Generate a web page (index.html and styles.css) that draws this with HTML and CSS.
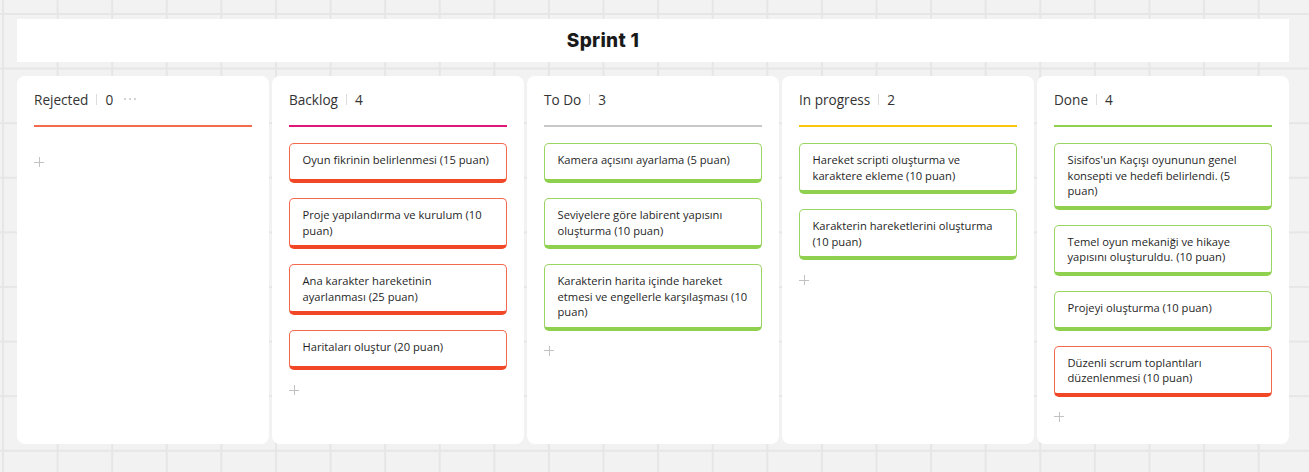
FILE: index.html
```html
<!DOCTYPE html>
<html lang="tr">
<head>
<meta charset="utf-8">
<title>Sprint 1</title>
<link rel="stylesheet" href="styles.css">
</head>
<body>
<div class="board">
  <div class="title-bar"><h1 class="title">Sprint 1</h1></div>
  <div class="columns">
    <section class="column">
      <header class="col-head"><span class="col-name">Rejected</span><span class="sep"></span><span class="count">0</span><span class="dots"><i></i><i></i><i></i></span></header>
      <div class="rule rule-red"></div>
      <div class="cards">
        <span class="plus plus-empty"></span>
      </div>
    </section>
    <section class="column">
      <header class="col-head"><span class="col-name">Backlog</span><span class="sep"></span><span class="count">4</span></header>
      <div class="rule rule-magenta"></div>
      <div class="cards">
        <div class="card card-red">Oyun fikrinin belirlenmesi (15 puan)</div>
        <div class="card card-red">Proje yapılandırma ve kurulum (10 puan)</div>
        <div class="card card-red">Ana karakter hareketinin ayarlanması (25 puan)</div>
        <div class="card card-red">Haritaları oluştur (20 puan)</div>
        <span class="plus"></span>
      </div>
    </section>
    <section class="column">
      <header class="col-head"><span class="col-name">To Do</span><span class="sep"></span><span class="count">3</span></header>
      <div class="rule rule-gray"></div>
      <div class="cards">
        <div class="card card-green">Kamera açısını ayarlama (5 puan)</div>
        <div class="card card-green">Seviyelere göre labirent yapısını oluşturma (10 puan)</div>
        <div class="card card-green">Karakterin harita içinde hareket etmesi ve engellerle karşılaşması (10 puan)</div>
        <span class="plus"></span>
      </div>
    </section>
    <section class="column">
      <header class="col-head"><span class="col-name">In progress</span><span class="sep"></span><span class="count">2</span></header>
      <div class="rule rule-yellow"></div>
      <div class="cards">
        <div class="card card-green">Hareket scripti oluşturma ve karaktere ekleme (10 puan)</div>
        <div class="card card-green">Karakterin hareketlerini oluşturma (10 puan)</div>
        <span class="plus"></span>
      </div>
    </section>
    <section class="column">
      <header class="col-head"><span class="col-name">Done</span><span class="sep"></span><span class="count">4</span></header>
      <div class="rule rule-green"></div>
      <div class="cards">
        <div class="card card-green">Sisifos'un Kaçışı oyununun genel konsepti ve hedefi belirlendi. (5 puan)</div>
        <div class="card card-green">Temel oyun mekaniği ve hikaye yapısını oluşturuldu. (10 puan)</div>
        <div class="card card-green">Projeyi oluşturma (10 puan)</div>
        <div class="card card-red">Düzenli scrum toplantıları düzenlenmesi (10 puan)</div>
        <span class="plus"></span>
      </div>
    </section>
  </div>
</div>
</body>
</html>
```
FILE: styles.css
```css
* { box-sizing: border-box; }

html, body {
  margin: 0;
  height: 100%;
}

body {
  background-color: #f2f2f2;
  background-image:
    linear-gradient(to right, #e6e6e6 2px, transparent 2px),
    linear-gradient(to bottom, #e6e6e6 2px, transparent 2px);
  background-size: 54.6px 54.6px;
  background-position: 2px 13px;
  font-family: "Open Sans", "Noto Sans", sans-serif;
  color: #1f1f1f;
  overflow: hidden;
}

.board {
  padding: 19px 20px 0 17px;
  display: flex;
  flex-direction: column;
  gap: 14px;
}

.title-bar {
  height: 43px;
  background: #ffffff;
  display: flex;
  align-items: center;
  justify-content: center;
  padding-right: 100px;
}

.title {
  margin: 0;
  font-family: Inter, "Noto Sans", sans-serif;
  font-weight: 800;
  font-size: 19px;
  letter-spacing: 0.3px;
  color: #1a1a1a;
}

.columns {
  display: flex;
  gap: 3px;
}

.column {
  width: 252px;
  height: 368px;
  background: #ffffff;
  border-radius: 8px;
  padding: 13px 17px 0 17px;
  display: flex;
  flex-direction: column;
}

.col-head {
  height: 20px;
  display: flex;
  align-items: center;
  font-size: 13.6px;
  color: #333333;
}

.sep {
  width: 1px;
  height: 11px;
  background: #dcdcdc;
  margin: 0 8px;
}

.dots {
  margin-left: 11px;
  display: flex;
  gap: 3px;
  align-items: center;
}
.dots i {
  width: 2px;
  height: 2px;
  border-radius: 50%;
  background: #c6c6c6;
}

.rule {
  height: 2px;
  margin-top: 16px;
}
.rule-red { background: #f26b4c; }
.rule-magenta { background: #e01776; }
.rule-gray { background: #c8c8c8; }
.rule-yellow { background: #fac710; }
.rule-green { background: #8fd14f; }

.cards {
  padding-top: 16px;
  display: flex;
  flex-direction: column;
  gap: 15px;
}

.card {
  min-height: 40px;
  padding: 8px 10.5px 7px 12.5px;
  border: 1.5px solid;
  border-bottom-width: 4px;
  border-radius: 5px;
  font-size: 11.2px;
  line-height: 15.5px;
  color: #1f1f1f;
}

.card-red {
  border-color: #f4694c;
  border-bottom-color: #f24726;
}

.card-green {
  border-color: #9ad462;
  border-bottom-color: #8fd14f;
}

.plus {
  position: relative;
  width: 10px;
  height: 10px;
}
.plus::before,
.plus::after {
  content: "";
  position: absolute;
  background: #c2c2c2;
}
.plus::before {
  left: 0;
  top: 4.5px;
  width: 10px;
  height: 1px;
}
.plus::after {
  left: 4.5px;
  top: 0;
  width: 1px;
  height: 10px;
}

.plus-empty {
  margin-top: 14px;
}
```
